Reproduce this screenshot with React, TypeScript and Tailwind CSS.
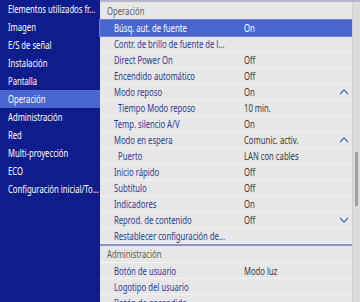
import React from "react";

const T = ({ children, className = "" }: { children: React.ReactNode; className?: string }) => (
  <span className={"block origin-center scale-y-[1.3] whitespace-nowrap text-[7.7px] leading-[8px] " + className}>{children}</span>
);

const Up = () => (
  <svg width="10" height="6" viewBox="0 0 10 6" fill="none" stroke="#4f5fb5" strokeWidth="1.2">
    <path d="M1 5 L5 1 L9 5" />
  </svg>
);
const Down = () => (
  <svg width="10" height="6" viewBox="0 0 10 6" fill="none" stroke="#4f5fb5" strokeWidth="1.2">
    <path d="M1 1 L5 5 L9 1" />
  </svg>
);

const left = [
  "Elementos utilizados fr...",
  "Imagen",
  "E/S de señal",
  "Instalación",
  "Pantalla",
  "Operación",
  "Administración",
  "Red",
  "Multi-proyección",
  "ECO",
  "Configuración inicial/To...",
];

type Row = { label: string; value?: string; sub?: boolean; icon?: "up" | "down"; active?: boolean };

const rows1: Row[] = [
  { label: "Búsq. aut. de fuente", value: "On", active: true },
  { label: "Contr. de brillo de fuente de l..." },
  { label: "Direct Power On", value: "Off" },
  { label: "Encendido automático", value: "Off" },
  { label: "Modo reposo", value: "On", icon: "up" },
  { label: "Tiempo Modo reposo", value: "10 min.", sub: true },
  { label: "Temp. silencio A/V", value: "On" },
  { label: "Modo en espera", value: "Comunic. activ.", icon: "up" },
  { label: "Puerto", value: "LAN con cables", sub: true },
  { label: "Inicio rápido", value: "Off" },
  { label: "Subtítulo", value: "Off" },
  { label: "Indicadores", value: "On" },
  { label: "Reprod. de contenido", value: "Off", icon: "down" },
  { label: "Restablecer configuración de..." },
];

const rows2: Row[] = [
  { label: "Botón de usuario", value: "Modo luz" },
  { label: "Logotipo del usuario" },
  { label: "Botón de encendido" },
];

const RowEl = ({ r }: { r: Row }) => (
  <div
    className={
      "flex h-[16px] shrink-0 items-center leading-none " +
      (r.active
        ? "bg-[#4a67cf] text-white outline outline-1 outline-[#6a84dc]"
        : "border-b border-[#f3f3f3]")
    }
  >
    <div className={(r.sub ? "pl-[18px] " : "pl-[14px] ") + "flex w-[144px] items-center " + (r.active ? "" : "text-[#2c3a9c]")}>
      <T>{r.label}</T>
    </div>
    <div className={"flex flex-1 items-center " + (r.active ? "" : "text-[#3a3a3a]")}>
      {r.value && <T>{r.value}</T>}
    </div>
    <div className="flex w-[14px] justify-center pr-[3px]">
      {r.icon === "up" && <Up />}
      {r.icon === "down" && <Down />}
    </div>
  </div>
);

export default function App() {
  return (
    <div className="flex h-[302px] w-[360px] overflow-hidden bg-[#e7e7e7] leading-none" style={{ fontFamily: '"Noto Sans", "Open Sans", sans-serif' }}>
      <div className="flex w-[100px] shrink-0 flex-col bg-[#0f1c8c] text-white">
        {left.map((l, i) => (
          <div
            key={l}
            className={"flex h-[18px] shrink-0 items-center pl-[8px] " + (i === 5 ? "bg-[#4a67cf]" : "")}
          >
            <T>{l}</T>
          </div>
        ))}
      </div>
      <div className="flex flex-1 border-t-2 border-[#b3b6cc]">
        <div className="flex flex-1 flex-col">
          <div className="flex h-[18px] shrink-0 items-center border-b border-[#f3f3f3] pl-[7px] text-[#5c5c5c]">
            <T>Operación</T>
          </div>
          {rows1.map((r) => (
            <RowEl key={r.label} r={r} />
          ))}
          <div className="h-[2px] shrink-0 bg-[#8b92c6]" />
          <div className="flex h-[17px] shrink-0 items-center border-b border-[#f3f3f3] pl-[7px] text-[#5c5c5c]">
            <T>Administración</T>
          </div>
          {rows2.map((r) => (
            <RowEl key={r.label} r={r} />
          ))}
        </div>
        <div className="relative w-[8px] shrink-0 border-l border-[#d0d0d0] bg-[#dcdcdc]">
          <div className="absolute left-[2px] top-[150px] h-[54px] w-[3px] bg-[#a0a0a0]" />
        </div>
      </div>
    </div>
  );
}
